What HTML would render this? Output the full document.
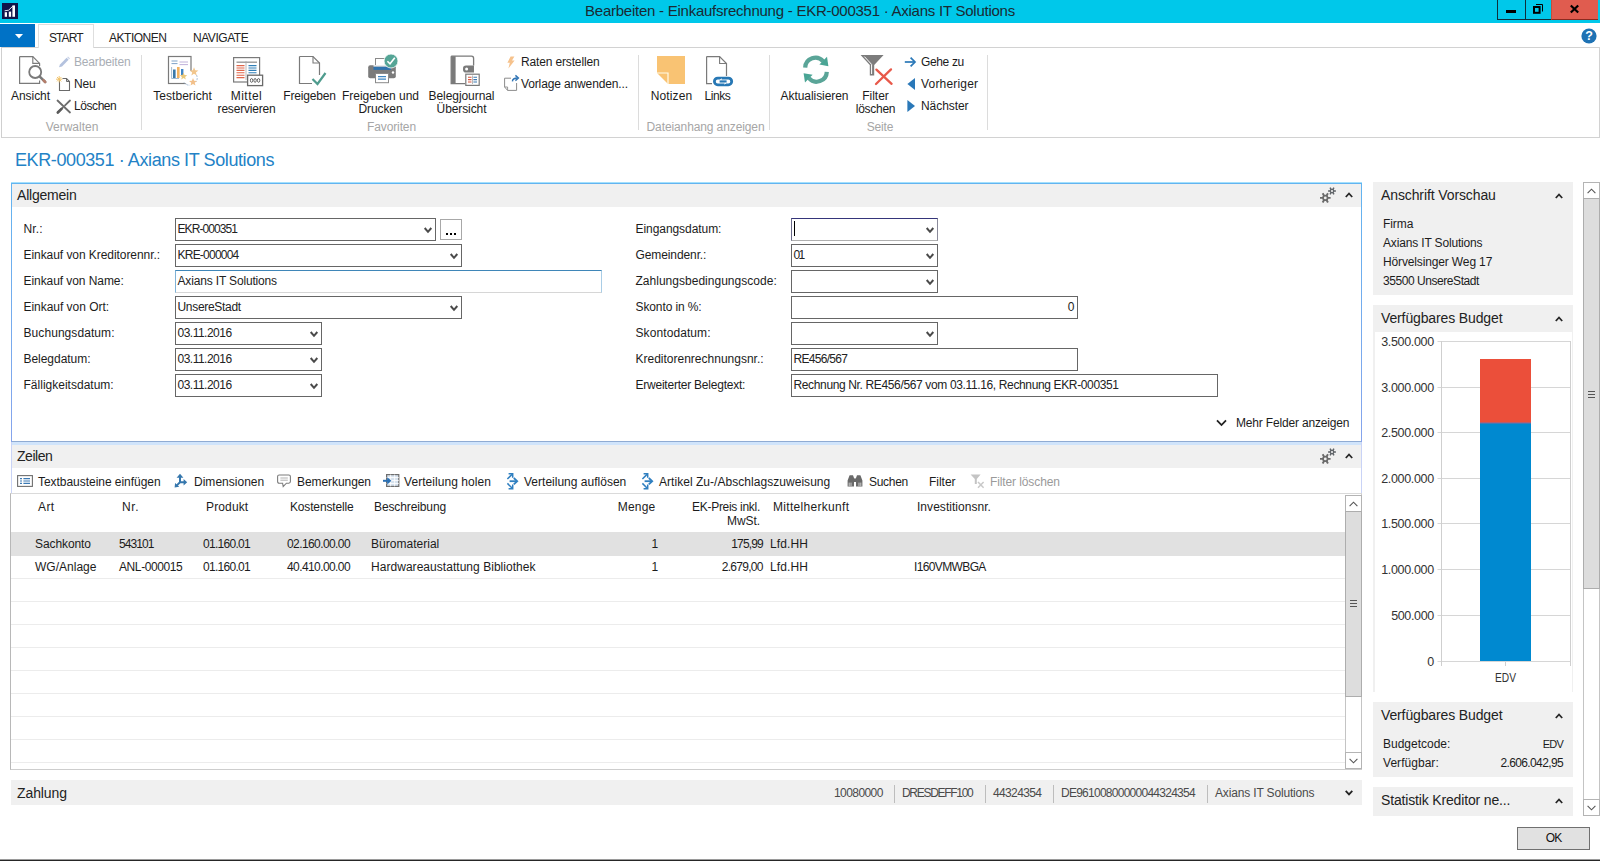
<!DOCTYPE html>
<html lang="de"><head>
<meta charset="utf-8">
<title>Bearbeiten - Einkaufsrechnung - EKR-000351 · Axians IT Solutions</title>
<style>
*{box-sizing:border-box;margin:0;padding:0}
html,body{width:1600px;height:861px;overflow:hidden;background:#fff}
body{position:relative;font-family:"Liberation Sans",sans-serif;font-size:12px;color:#1c1c1c}
.abs{position:absolute}
svg{position:absolute;overflow:visible}
.t{position:absolute;white-space:nowrap;line-height:14px;letter-spacing:-0.25px;color:#1c1c1c}
.c{transform:translateX(-50%);text-align:center}
.r{transform:translateX(-100%);text-align:right}
/* title bar */
#titlebar{position:absolute;left:0;top:0;width:1600px;height:23px;background:#00c8ea}
#title{position:absolute;left:0;width:1600px;top:2px;text-align:center;font-size:15px;line-height:17px;color:#1a2a33;letter-spacing:-0.35px}
.wb{position:absolute;top:0;height:20px;border-left:1px solid #0e2f3b;border-bottom:1px solid #0e2f3b}
/* tabs */
#appbtn{position:absolute;left:0;top:24px;width:35px;height:23px;background:#0072c6}
.tab{position:absolute;top:31px;font-size:12px;line-height:15px;color:#222;white-space:nowrap;letter-spacing:-0.4px}
#starttab{position:absolute;left:38px;top:24px;width:56px;height:24px;border:1px solid #dedede;border-bottom:none;background:#fff;z-index:2}
#ribbon{position:absolute;left:1px;top:47px;width:1599px;height:91px;border:1px solid #d2d2d2;border-left:1px solid #cfcfcf;background:#fff}
.sep{position:absolute;top:55px;width:1px;height:75px;background:#dcdcdc}
.grp{position:absolute;top:120px;color:#a6a6a6;white-space:nowrap;line-height:14px;transform:translateX(-50%);letter-spacing:-0.2px}
.dis{color:#a9aeb5}
/* panels */
.phead{position:absolute;background:#f0f0f0;height:24px}
.ptitle{position:absolute;font-size:14px;line-height:16px;letter-spacing:-0.35px;color:#222;white-space:nowrap}
.inp{position:absolute;height:23px;border:1px solid #666;background:#fff;font-size:12px;line-height:14px;padding:3px 0 0 1.5px;white-space:nowrap;letter-spacing:-0.45px;color:#222;overflow:hidden}
.lbl{position:absolute;white-space:nowrap;line-height:14px;letter-spacing:-0.1px;color:#1c1c1c}
.gl{position:absolute;left:11px;width:1334px;height:1px;background:#ececec}
.fb{position:absolute;left:1373px;width:200px;background:#f0f0f0}
.fbt{position:absolute;left:8px;top:5px;font-size:14px;line-height:16px;letter-spacing:-0.2px;white-space:nowrap;color:#222}
</style>
</head>
<body>
<!-- TITLE BAR -->
<div id="titlebar"></div>
<svg style="left:2px;top:3px" width="16" height="16" viewBox="0 0 16 16"><rect width="16" height="16" fill="#10154a"></rect><rect x="2.700" y="9.200" width="2.300" height="4.600" fill="#fff"></rect><rect x="6.800" y="8.600" width="2.300" height="5.200" fill="#fff"></rect><rect x="10.400" y="2.400" width="2.600" height="11.400" fill="#fff"></rect><path d="M2.600 7.800 L6.600 7.200 L11 3" stroke="#e6e6f2" stroke-width="1" fill="none"></path></svg>
<div id="title" style="letter-spacing: -0.25px;">Bearbeiten - Einkaufsrechnung - EKR-000351 · Axians IT Solutions</div>
<div class="wb" style="left:1497px;width:29px"></div>
<div class="wb" style="left:1525px;width:27px"></div>
<div class="wb" style="left:1551px;width:47px;background:#e05c4f;border-left-color:#c0503f;border-bottom-color:#8a2a20"></div>
<div class="abs" style="left:1506px;top:10px;width:10px;height:3px;background:#000"></div>
<svg style="left:1533px;top:4px" width="11" height="10" viewBox="0 0 11 10"><path d="M3 0.500 H9.500 V7.500" stroke="#000" stroke-width="1" fill="none"></path><rect x="1" y="3" width="5.600" height="5.800" stroke="#000" stroke-width="2" fill="none"></rect></svg>
<svg style="left:1570px;top:5px" width="9" height="8" viewBox="0 0 9 8"><path d="M0.8 0.5 L8.2 7.5 M8.2 0.5 L0.8 7.5" stroke="#000" stroke-width="2.2" fill="none"></path></svg>
<!-- TABS -->
<div id="appbtn"></div>
<svg style="left:15px;top:33.500px" width="8" height="5" viewBox="0 0 8 5"><path d="M0 0 H8 L4 4.6 Z" fill="#fff"></path></svg>
<div id="starttab"></div>
<div class="tab" style="left: 49px; z-index: 3; letter-spacing: -0.93px;">START</div>
<div class="tab" style="left: 109px; letter-spacing: -0.48px;">AKTIONEN</div>
<div class="tab" style="left: 193px; letter-spacing: -0.46px;">NAVIGATE</div>
<svg style="left:1581px;top:28px" width="16" height="16" viewBox="0 0 16 16"><circle cx="8" cy="8" r="7.6" fill="#1e72b4"></circle><text x="8" y="12.4" font-family="Liberation Sans, sans-serif" font-size="12.5" font-weight="bold" fill="#fff" text-anchor="middle">?</text></svg>
<div id="ribbon"></div>
<!-- RIBBON -->
<div class="sep" style="left:141px"></div>
<div class="sep" style="left:638px"></div>
<div class="sep" style="left:769px"></div>
<div class="sep" style="left:987px"></div>
<!-- Ansicht -->
<svg style="left:18px;top:55px" width="30" height="30" viewBox="0 0 30 30"><path d="M1.600 1.600 H14.800 L21.600 8.400 V11 M1.600 1.600 V28.400 H21.600 V25.500" stroke="#7a7a7a" stroke-width="1.200" fill="none"></path><path d="M14.800 1.600 V8.400 H21.600" stroke="#7a7a7a" stroke-width="1.100" fill="none"></path><circle cx="17.200" cy="17" r="6" stroke="#7a7a7a" stroke-width="1.800" fill="#fff"></circle><path d="M21.800 21.600 L27.200 27" stroke="#7a7a7a" stroke-width="2.500" stroke-linecap="round"></path><path d="M25.600 25.400 L27.200 27" stroke="#b57d6a" stroke-width="2.500" stroke-linecap="round"></path></svg>
<div class="t c" style="left: 30.5px; top: 89px; letter-spacing: -0.06px;">Ansicht</div>
<svg style="left:57px;top:56px" width="14" height="13" viewBox="0 0 14 13"><path d="M2 11.3 L3 8.4 L9.6 1.8 L11.6 3.8 L5 10.4 Z" fill="#b4c2de"></path><path d="M10.2 1.2 L11 0.5 L13 2.5 L12.2 3.2 Z" fill="#c6d0e6"></path></svg>
<div class="t dis" style="left: 74px; top: 55px; letter-spacing: -0.16px;">Bearbeiten</div>
<svg style="left:56px;top:76px" width="16" height="16" viewBox="0 0 16 16"><path d="M3.5 4.5 V14.5 H13.5 V5.5 L10.5 2.5 H6.5" stroke="#6a6a6a" stroke-width="1.1" fill="#fff"></path><path d="M10.5 2.5 V5.5 H13.5" stroke="#6a6a6a" stroke-width="1" fill="none"></path><path d="M3.2 0 V6.4 M0 3.2 H6.4 M1 1 L5.4 5.4 M5.4 1 L1 5.4" stroke="#f0c060" stroke-width="0.9"></path></svg>
<div class="t" style="left: 74px; top: 77px; letter-spacing: -0.11px;">Neu</div>
<svg style="left:56px;top:99px" width="16" height="15" viewBox="0 0 16 15"><path d="M1.5 1.5 L14 13.5" stroke="#6c6c6c" stroke-width="1.8" stroke-linecap="round"></path><path d="M14 1.5 L9 6.3 M6.8 8.6 L1.8 13.5" stroke="#6c6c6c" stroke-width="1.8" stroke-linecap="round"></path><path d="M1.8 13.5 L5.5 9.8" stroke="#5a5a5a" stroke-width="2.6" stroke-linecap="round"></path></svg>
<div class="t" style="left: 74px; top: 99px; letter-spacing: -0.43px;">Löschen</div>
<div class="grp" style="left: 72px; letter-spacing: -0.01px;">Verwalten</div>
<!-- Testbericht -->
<svg style="left:167px;top:55px" width="34" height="32" viewBox="0 0 34 32"><rect x="1.5" y="1.5" width="22.5" height="27" stroke="#7a7a7a" stroke-width="1.2" fill="#fff"></rect><path d="M4.5 6 H10.5 M4.5 8.6 H10.5" stroke="#7fa3c8" stroke-width="1"></path><path d="M12.5 7 H21 M12.5 9.6 H21" stroke="#b9a9d6" stroke-width="0.9"></path><rect x="6" y="14.5" width="2.6" height="8.5" fill="#3b78a8"></rect><rect x="10" y="12" width="2.6" height="11" fill="#f3b25f"></rect><rect x="14" y="14" width="2.4" height="6" fill="#3f85c6"></rect><path d="M4.6 12 V23.5 H12" stroke="#8aa9c8" stroke-width="0.8" fill="none"></path><circle cx="23" cy="23" r="7" fill="#fff"></circle><path d="M17 27.5 A7 7 0 0 0 23 30.2 M29.5 20 A7 7 0 0 1 29 27" stroke="#9db7d4" stroke-width="0.9" fill="none" stroke-dasharray="2 1.2"></path><path d="M27 12.2 l1.2 3 3.2 .2 -2.5 2 .9 3.1 -2.8 -1.8 -2.7 1.8 .9 -3.1 -2.5 -2 3.2 -.2z" fill="#f2c68c"></path><path d="M16.5 17.5 l1 2.5 2.7 .2 -2.1 1.7 .7 2.6 -2.3 -1.5 -2.3 1.5 .7 -2.6 -2.1 -1.7 2.7 -.2z" fill="#e9c87a"></path><path d="M26 23 l1.1 2.7 2.9 .2 -2.3 1.8 .8 2.8 -2.5 -1.6 -2.5 1.6 .8 -2.8 -2.3 -1.8 2.9 -.2z" fill="#f2c08a"></path></svg>
<div class="t c" style="left: 182.5px; top: 89px; letter-spacing: 0.06px;">Testbericht</div>
<!-- Mittel reservieren -->
<svg style="left:232px;top:56px" width="32" height="31" viewBox="0 0 32 31"><rect x="1.6" y="1.6" width="26" height="24.4" stroke="#7a7a7a" stroke-width="1.2" fill="#fff"></rect><path d="M4.5 6.2 H25" stroke="#9a9a9a" stroke-width="1.4"></path><path d="M4.5 9.6 H12.5 M4.5 12 H12.5 M4.5 14.4 H12.5 M4.5 16.8 H12.5 M4.5 19.2 H12.5 M4.5 21.6 H12.5" stroke="#e0664a" stroke-width="1.1"></path><path d="M14 5 V24" stroke="#aaa" stroke-width="0.8"></path><path d="M16.5 9.6 H24.5 M16.5 12 H24.5 M16.5 14.4 H24.5 M16.5 16.8 H24.5" stroke="#2f7fb8" stroke-width="1.1"></path><rect x="15.6" y="19.2" width="15" height="10.4" stroke="#6a6a6a" stroke-width="1.3" fill="#fff"></rect><ellipse cx="19.6" cy="24.4" rx="1.2" ry="1.9" stroke="#555" stroke-width="0.9" fill="none"></ellipse><ellipse cx="23.1" cy="24.4" rx="1.2" ry="1.9" stroke="#555" stroke-width="0.9" fill="none"></ellipse><ellipse cx="26.6" cy="24.4" rx="1.2" ry="1.9" stroke="#555" stroke-width="0.9" fill="none"></ellipse></svg>
<div class="t c" style="left: 246.5px; top: 89px; letter-spacing: 0.47px;">Mittel</div>
<div class="t c" style="left: 246.5px; top: 102px; letter-spacing: -0.2px;">reservieren</div>
<!-- Freigeben -->
<svg style="left:298px;top:55px" width="30" height="31" viewBox="0 0 30 31"><path d="M1.5 1.5 H15 L21.5 8 V20 M1.5 1.5 V28.5 H14" stroke="#7a7a7a" stroke-width="1.2" fill="none"></path><path d="M15 1.5 V8 H21.5" stroke="#7a7a7a" stroke-width="1.1" fill="none"></path><path d="M14.5 24 L19.5 29 L27.5 18" stroke="#4f9c8e" stroke-width="2.2" fill="none"></path></svg>
<div class="t c" style="left: 309.5px; top: 89px; letter-spacing: -0.18px;">Freigeben</div>
<!-- Freigeben und Drucken -->
<svg style="left:367px;top:53px" width="34" height="31" viewBox="0 0 34 31"><rect x="8.5" y="5.5" width="14" height="9" stroke="#8a8a8a" stroke-width="1" fill="#fff"></rect><rect x="1.2" y="12.2" width="27.6" height="13" rx="2" fill="#7b7b7b"></rect><rect x="6.5" y="13.5" width="17.5" height="3.4" fill="#2f73ae"></rect><rect x="6.5" y="12.2" width="17.5" height="1.3" fill="#fff"></rect><rect x="8.5" y="20.5" width="13" height="9.2" stroke="#8a8a8a" stroke-width="1" fill="#fff"></rect><path d="M11 23.6 H19 M11 26.2 H19" stroke="#3f86c2" stroke-width="1.2"></path><circle cx="26" cy="19.5" r="1.2" fill="#fff"></circle><circle cx="24" cy="8" r="7" fill="#55a596" stroke="#fff" stroke-width="0.8"></circle><path d="M20.4 8.2 L23 10.8 L27.8 4.8" stroke="#fff" stroke-width="1.6" fill="none"></path></svg>
<div class="t c" style="left: 380.5px; top: 89px; letter-spacing: -0.03px;">Freigeben und</div>
<div class="t c" style="left: 380.5px; top: 102px; letter-spacing: -0.08px;">Drucken</div>
<!-- Belegjournal -->
<svg style="left:450px;top:55px" width="31" height="32" viewBox="0 0 31 32"><path d="M1.2 1.2 H21.5 Q23.6 1.2 23.6 3.4 V10.5 M1.2 1.2 V28.6 H15" stroke="#7a7a7a" stroke-width="1.3" fill="none"></path><rect x="1.2" y="1.2" width="4.4" height="27.4" fill="#7a7a7a"></rect><path d="M13 13.2 Q13 10.4 16 10.4 H24 V17.6 H16 Q13 17.6 13 14.8 Z" fill="#7a7a7a"></path><circle cx="16.6" cy="14" r="1.5" fill="#fff"></circle><rect x="15.8" y="19.2" width="13.4" height="11.2" stroke="#7a7a7a" stroke-width="1.2" fill="#fff"></rect><path d="M18 22.2 H21.5 M18 24.6 H21.5 M18 27 H21.5" stroke="#d8553c" stroke-width="1.1"></path><path d="M23.4 22.2 H27 M23.4 24.6 H27 M23.4 27 H27" stroke="#3a78b0" stroke-width="1.1"></path><path d="M22.5 20.5 V29" stroke="#999" stroke-width="0.7"></path></svg>
<div class="t c" style="left: 461.5px; top: 89px; letter-spacing: -0.07px;">Belegjournal</div>
<div class="t c" style="left: 461.5px; top: 102px; letter-spacing: -0.09px;">Übersicht</div>
<!-- Raten / Vorlage -->
<svg style="left:506px;top:56px" width="10" height="13" viewBox="0 0 10 13"><path d="M4.6 0.5 H8.4 L6 4.6 H8.6 L2.4 12.4 L3.8 6.8 H1.4 Z" fill="#f6c28c"></path></svg>
<div class="t" style="left: 521px; top: 55px; letter-spacing: -0.15px;">Raten erstellen</div>
<svg style="left:503px;top:75px" width="18" height="17" viewBox="0 0 18 17"><path d="M8 3.2 H1.6 V12 L4.6 15.4 H13.6 V8" stroke="#8c8c8c" stroke-width="1" fill="#fff"></path><path d="M1.6 12 H4.6 V15.4" stroke="#8c8c8c" stroke-width="0.9" fill="none"></path><path d="M9.4 6.4 Q9.6 3 14.6 3" stroke="#2f74b5" stroke-width="1.4" fill="none"></path><path d="M12.4 0.4 L15.4 3 L12.4 5.6" stroke="#2f74b5" stroke-width="1.4" fill="none"></path></svg>
<div class="t" style="left: 521px; top: 77px; letter-spacing: -0.13px;">Vorlage anwenden...</div>
<div class="grp" style="left: 391.5px; letter-spacing: -0.13px;">Favoriten</div>
<!-- Notizen / Links -->
<svg style="left:657px;top:56px" width="28" height="28" viewBox="0 0 28 28"><path d="M0 0 H28 V28 H11 L0 17 Z" fill="#f9c373"></path><path d="M0 17 H11 V28" stroke="#fffbe8" stroke-width="1.2" fill="none"></path></svg>
<div class="t c" style="left: 671.5px; top: 89px; letter-spacing: 0.12px;">Notizen</div>
<svg style="left:705px;top:55px" width="30" height="33" viewBox="0 0 30 33"><path d="M1.6 1.6 H14.6 L21.5 8.5 V21 M1.6 1.6 V28.6 H7" stroke="#7a7a7a" stroke-width="1.2" fill="none"></path><path d="M14.6 1.6 V8.5 H21.5" stroke="#7a7a7a" stroke-width="1.1" fill="none"></path><rect x="9.400" y="23.100" width="17.300" height="6.700" rx="3.350" stroke="#2778b5" stroke-width="2.800" fill="#fff"></rect><path d="M14.600 26.450 H21.600" stroke="#2778b5" stroke-width="2.200"></path><path d="M15.200 24.800 L17 23.900 M19.200 29 L21 28.100" stroke="#fff" stroke-width="1"></path></svg>
<div class="t c" style="left: 717.5px; top: 89px; letter-spacing: -0.45px;">Links</div>
<div class="grp" style="left: 705.5px; letter-spacing: -0.11px;">Dateianhang anzeigen</div>
<!-- Aktualisieren -->
<svg style="left:801px;top:55px" width="30" height="30" viewBox="0 0 30 30"><path d="M4.2 12.6 A10.2 10.2 0 0 1 22.2 6.4" stroke="#5aa598" stroke-width="4.2" fill="none"></path><path d="M18.4 9.6 L27.4 11.2 L26 1.8 Z" fill="#4aa595"></path><path d="M25.8 16.8 A10.2 10.2 0 0 1 7.8 23" stroke="#5aa598" stroke-width="4.2" fill="none"></path><path d="M11.6 19.8 L2.6 18.2 L4 27.6 Z" fill="#4aa595"></path></svg>
<div class="t c" style="left: 814.5px; top: 89px; letter-spacing: -0.06px;">Aktualisieren</div>
<!-- Filter loeschen -->
<svg style="left:859px;top:54px" width="36" height="32" viewBox="0 0 36 32"><path d="M1.6 1 H24.6 L15.2 11 V21.6 H10.8 V11 Z" fill="#7c7c7c"></path><path d="M5.4 2.6 L12.6 10.4 V20" stroke="#fff" stroke-width="1" fill="none"></path><path d="M17.4 15.6 L32.6 29.8" stroke="#e8594a" stroke-width="2.3" stroke-linecap="round"></path><path d="M32 15.4 L17 30" stroke="#e8594a" stroke-width="2.3" stroke-linecap="round"></path></svg>
<div class="t c" style="left: 875.5px; top: 89px; letter-spacing: -0.03px;">Filter</div>
<div class="t c" style="left: 875.5px; top: 102px; letter-spacing: -0.26px;">löschen</div>
<svg style="left:904px;top:56px" width="13" height="12" viewBox="0 0 13 12"><path d="M0.8 6 H10.5" stroke="#2a78b8" stroke-width="1.7"></path><path d="M6.6 1.6 L11 6 L6.6 10.4" stroke="#2a78b8" stroke-width="1.7" fill="none"></path></svg>
<div class="t" style="left: 921px; top: 55px; letter-spacing: -0.36px;">Gehe zu</div>
<svg style="left:907px;top:78px" width="9" height="12" viewBox="0 0 9 12"><path d="M8 0 V12 L0.4 6 Z" fill="#2a78b8"></path></svg>
<div class="t" style="left: 921px; top: 77px; letter-spacing: 0.18px;">Vorheriger</div>
<svg style="left:907px;top:100px" width="9" height="12" viewBox="0 0 9 12"><path d="M0.4 0 V12 L8 6 Z" fill="#2a78b8"></path></svg>
<div class="t" style="left: 921px; top: 99px; letter-spacing: -0.06px;">Nächster</div>
<div class="grp" style="left: 880px; letter-spacing: -0.19px;">Seite</div>
<!-- PAGE TITLE -->
<div class="abs" style="left: 15px; top: 150px; font-size: 18px; line-height: 20px; color: rgb(35, 130, 198); white-space: nowrap; letter-spacing: -0.4px;">EKR-000351 · Axians IT Solutions</div>
<!-- ALLGEMEIN -->
<div class="abs" style="left:10.5px;top:182px;width:1351.5px;height:260px;background:linear-gradient(#62b4f0,#86a4ec)"></div>
<div class="abs" style="left:10.5px;top:182px;width:1351.5px;height:1px;background:#a4e0fc"></div>
<div class="abs" style="left:12px;top:184px;width:1349px;height:257px;background:#fff"></div>
<div class="abs" style="left:12px;top:441px;width:1349px;height:1px;background:#8fabd3"></div>
<div class="phead" style="left:12px;top:184px;width:1349px;height:23px"></div>
<div class="ptitle" style="left: 17px; top: 187px; letter-spacing: -0.21px;">Allgemein</div>
<svg style="left:1319px;top:185px" width="18" height="20" viewBox="0 0 18 20"><g stroke="#6a6a6a" stroke-width="1.9" fill="none"><path d="M1 12.900 H11.600 M3.650 8.300 L8.950 17.500 M8.950 8.300 L3.650 17.500"></path></g><circle cx="6.300" cy="12.900" r="3.100" fill="#6a6a6a"></circle><circle cx="6.300" cy="12.900" r="1.400" fill="#f0f0f0"></circle><g stroke="#5f6368" stroke-width="1.500" fill="none"><path d="M9.100 6 H16.900 M11.050 2.600 L14.950 9.400 M14.950 2.600 L11.050 9.400"></path></g><circle cx="13" cy="6" r="2.300" fill="#5f6368"></circle><circle cx="13" cy="6" r="1.100" fill="#f0f0f0"></circle></svg>
<svg style="left:1344.500px;top:191.500px" width="8" height="6" viewBox="0 0 8 6"><path d="M0.800 5 L4 1.500 L7.200 5" stroke="#262626" stroke-width="1.800" fill="none"></path></svg>
<div class="lbl" style="left: 23.5px; top: 222px; letter-spacing: 0.11px;">Nr.:</div>
<div class="lbl" style="left: 23.5px; top: 248px; letter-spacing: -0.06px;">Einkauf von Kreditorennr.:</div>
<div class="lbl" style="left: 23.5px; top: 274px; letter-spacing: -0.07px;">Einkauf von Name:</div>
<div class="lbl" style="left: 23.5px; top: 300px; letter-spacing: -0.03px;">Einkauf von Ort:</div>
<div class="lbl" style="left: 23.5px; top: 326px; letter-spacing: 0.07px;">Buchungsdatum:</div>
<div class="lbl" style="left: 23.5px; top: 352px; letter-spacing: -0.04px;">Belegdatum:</div>
<div class="lbl" style="left: 23.5px; top: 378px; letter-spacing: 0.01px;">Fälligkeitsdatum:</div>
<div class="lbl" style="left: 635.5px; top: 222px; letter-spacing: -0.06px;">Eingangsdatum:</div>
<div class="lbl" style="left: 635.5px; top: 248px; letter-spacing: -0.1px;">Gemeindenr.:</div>
<div class="lbl" style="left: 635.5px; top: 274px; letter-spacing: 0.02px;">Zahlungsbedingungscode:</div>
<div class="lbl" style="left: 635.5px; top: 300px; letter-spacing: -0.11px;">Skonto in %:</div>
<div class="lbl" style="left: 635.5px; top: 326px; letter-spacing: 0.09px;">Skontodatum:</div>
<div class="lbl" style="left: 635.5px; top: 352px; letter-spacing: 0px;">Kreditorenrechnungsnr.:</div>
<div class="lbl" style="left: 635.5px; top: 378px; letter-spacing: -0.23px;">Erweiterter Belegtext:</div>
<div class="inp" style="left: 175px; top: 218px; width: 261px; letter-spacing: -0.91px;">EKR-000351</div>
<svg style="left:423.6px;top:227px" width="8" height="7" viewBox="0 0 8 7"><path d="M0.7 1 L4 4.8 L7.3 1" stroke="#4a4a4a" stroke-width="2" fill="none"></path></svg>
<div class="inp" style="left: 175px; top: 244px; width: 287px; letter-spacing: -0.77px;">KRE-000004</div>
<svg style="left:449.6px;top:253px" width="8" height="7" viewBox="0 0 8 7"><path d="M0.7 1 L4 4.8 L7.3 1" stroke="#4a4a4a" stroke-width="2" fill="none"></path></svg>
<div class="inp" style="left: 175px; top: 270px; width: 427px; border-color: rgb(63, 134, 184) rgb(169, 205, 230) rgb(214, 214, 214) rgb(127, 178, 214); letter-spacing: -0.16px;">Axians IT Solutions</div>
<div class="inp" style="left: 175px; top: 296px; width: 287px; letter-spacing: -0.31px;">UnsereStadt</div>
<svg style="left:449.6px;top:305px" width="8" height="7" viewBox="0 0 8 7"><path d="M0.7 1 L4 4.8 L7.3 1" stroke="#4a4a4a" stroke-width="2" fill="none"></path></svg>
<div class="inp" style="left: 175px; top: 322px; width: 147px; letter-spacing: -0.51px;">03.11.2016</div>
<svg style="left:309.6px;top:331px" width="8" height="7" viewBox="0 0 8 7"><path d="M0.7 1 L4 4.8 L7.3 1" stroke="#4a4a4a" stroke-width="2" fill="none"></path></svg>
<div class="inp" style="left: 175px; top: 348px; width: 147px; letter-spacing: -0.51px;">03.11.2016</div>
<svg style="left:309.6px;top:357px" width="8" height="7" viewBox="0 0 8 7"><path d="M0.7 1 L4 4.8 L7.3 1" stroke="#4a4a4a" stroke-width="2" fill="none"></path></svg>
<div class="inp" style="left: 175px; top: 374px; width: 147px; letter-spacing: -0.51px;">03.11.2016</div>
<svg style="left:309.6px;top:383px" width="8" height="7" viewBox="0 0 8 7"><path d="M0.7 1 L4 4.8 L7.3 1" stroke="#4a4a4a" stroke-width="2" fill="none"></path></svg>
<div class="inp" style="left:791px;top:218px;width:147px;border-color:#35357a #8a8a9a #b0b0b0 #6a6a8a"></div>
<svg style="left:925.6px;top:227px" width="8" height="7" viewBox="0 0 8 7"><path d="M0.7 1 L4 4.8 L7.3 1" stroke="#4a4a4a" stroke-width="2" fill="none"></path></svg>
<div class="inp" style="left: 791px; top: 244px; width: 147px; letter-spacing: -1.76px;">01</div>
<svg style="left:925.6px;top:253px" width="8" height="7" viewBox="0 0 8 7"><path d="M0.7 1 L4 4.8 L7.3 1" stroke="#4a4a4a" stroke-width="2" fill="none"></path></svg>
<div class="inp" style="left:791px;top:270px;width:147px;"></div>
<svg style="left:925.6px;top:279px" width="8" height="7" viewBox="0 0 8 7"><path d="M0.7 1 L4 4.8 L7.3 1" stroke="#4a4a4a" stroke-width="2" fill="none"></path></svg>
<div class="inp" style="left:791px;top:296px;width:287px;text-align:right;padding-right:3px">0</div>
<div class="inp" style="left:791px;top:322px;width:147px;"></div>
<svg style="left:925.6px;top:331px" width="8" height="7" viewBox="0 0 8 7"><path d="M0.7 1 L4 4.8 L7.3 1" stroke="#4a4a4a" stroke-width="2" fill="none"></path></svg>
<div class="inp" style="left: 791px; top: 348px; width: 287px; letter-spacing: -0.71px;">RE456/567</div>
<div class="inp" style="left: 791px; top: 374px; width: 427px; letter-spacing: -0.36px;">Rechnung Nr. RE456/567 vom 03.11.16, Rechnung EKR-000351</div>
<div class="abs" style="left:440px;top:219px;width:22px;height:21px;border:1px solid #a8a8a8;background:#fff"></div>
<div class="abs" style="left:446px;top:233px;width:2px;height:2px;background:#000;box-shadow:4px 0 0 #000,8px 0 0 #000"></div>
<div class="abs" style="left:794px;top:221px;width:1px;height:15px;background:#000"></div>
<svg style="left:1216px;top:419px" width="11" height="8" viewBox="0 0 11 8"><path d="M1 1.3 L5.500 6 L10 1.3" stroke="#222" stroke-width="1.8" fill="none"></path></svg>
<div class="lbl" style="left: 1236px; top: 416px; letter-spacing: -0.17px;">Mehr Felder anzeigen</div>
<!-- ZEILEN -->
<div class="abs" style="left:10.5px;top:442px;width:1351.5px;height:52px;background:#c9d3f6"></div>
<div class="abs" style="left:12px;top:442px;width:1349px;height:3px;background:#d0e4fb"></div>
<div class="abs" style="left:12px;top:445px;width:1349px;height:49px;background:#fff"></div>
<div class="phead" style="left:12px;top:445px;width:1349px;height:23px"></div>
<div class="ptitle" style="left: 17px; top: 448px; letter-spacing: -0.47px;">Zeilen</div>
<svg style="left:1319px;top:446px" width="18" height="20" viewBox="0 0 18 20"><g stroke="#6a6a6a" stroke-width="1.9" fill="none"><path d="M1 12.900 H11.600 M3.650 8.300 L8.950 17.500 M8.950 8.300 L3.650 17.500"></path></g><circle cx="6.300" cy="12.900" r="3.100" fill="#6a6a6a"></circle><circle cx="6.300" cy="12.900" r="1.400" fill="#f0f0f0"></circle><g stroke="#5f6368" stroke-width="1.500" fill="none"><path d="M9.100 6 H16.900 M11.050 2.600 L14.950 9.400 M14.950 2.600 L11.050 9.400"></path></g><circle cx="13" cy="6" r="2.300" fill="#5f6368"></circle><circle cx="13" cy="6" r="1.100" fill="#f0f0f0"></circle></svg>
<svg style="left:1344.500px;top:452.500px" width="8" height="6" viewBox="0 0 8 6"><path d="M0.800 5 L4 1.500 L7.200 5" stroke="#262626" stroke-width="1.800" fill="none"></path></svg>
<!-- toolbar -->
<svg style="left:17px;top:475px" width="16" height="12" viewBox="0 0 16 12"><rect x="0.6" y="0.6" width="14.8" height="10.8" stroke="#6f6f6f" stroke-width="1.1" fill="#fff"></rect><path d="M3 3.6 H5 M6.4 3.6 H13 M3 6 H5 M6.4 6 H13 M3 8.4 H5 M6.4 8.4 H13" stroke="#3b79b3" stroke-width="1.1"></path></svg>
<div class="t tb" style="left: 38px; top: 474.5px; letter-spacing: -0.04px;">Textbausteine einfügen</div>
<svg style="left:174px;top:473px" width="14" height="15" viewBox="0 0 14 15"><path d="M6 9.200 V3.500 M6 9.200 H10.500 M6 9.200 L2.800 12.400" stroke="#3677ad" stroke-width="2" fill="none"></path><path d="M6 0.800 L9.400 4.800 H2.600 Z M13.200 9.200 L9.600 5.900 V12.500 Z M0.600 14.400 L1.100 9.900 L5.300 13.800 Z" fill="#3677ad"></path></svg>
<div class="t tb" style="left: 194px; top: 474.5px; letter-spacing: 0.02px;">Dimensionen</div>
<svg style="left:277px;top:474px" width="15" height="14" viewBox="0 0 15 14"><path d="M2.200 1 H11.800 Q13.400 1 13.400 2.600 V7.600 Q13.400 9.200 11.800 9.200 H9.400 L6.200 12.600 L5.600 9.200 H2.200 Q0.600 9.200 0.600 7.600 V2.600 Q0.600 1 2.200 1 Z" stroke="#7d7d7d" stroke-width="1.100" fill="#fff"></path><path d="M3.400 4 H10.800 M3.400 6.200 H10.800" stroke="#a8a8a8" stroke-width="0.900"></path></svg>
<div class="t tb" style="left: 297px; top: 474.5px; letter-spacing: -0.07px;">Bemerkungen</div>
<svg style="left:383px;top:474px" width="17" height="13" viewBox="0 0 17 13"><rect x="3.600" y="0.600" width="12.200" height="11.800" stroke="#6e6e6e" stroke-width="1.200" fill="#d6e2ee"></rect><path d="M3.600 3.500 H15.800 M3.600 6.500 H15.800 M3.600 9.500 H15.800 M7.600 0.600 V12.400 M11.600 0.600 V12.400" stroke="#fff" stroke-width="0.800"></path><path d="M0 6.800 H6.400" stroke="#2a70b4" stroke-width="2"></path><path d="M4.200 3.200 L8.400 6.800 L4.200 10.400 Z" fill="#2a70b4"></path></svg>
<div class="t tb" style="left: 404px; top: 474.5px; letter-spacing: 0.06px;">Verteilung holen</div>
<svg style="left:505px;top:472px" width="14" height="18" viewBox="0 0 14 18"><g stroke="#2f7fc0" fill="none"><path d="M2.400 7 L7 2.400" stroke-width="1.500"></path><path d="M3.600 1.700 H7.700 V5.800" stroke-width="1.500"></path><path d="M4.600 9.200 H11.800" stroke-width="1.800"></path><path d="M8.800 6 L12.200 9.200 L8.800 12.400" stroke-width="1.800"></path><path d="M2.400 11.400 L7 16" stroke-width="1.500"></path><path d="M3.600 16.700 H7.700 V12.600" stroke-width="1.500"></path></g></svg>
<div class="t tb" style="left: 524px; top: 474.5px; letter-spacing: 0.01px;">Verteilung auflösen</div>
<svg style="left:640px;top:472px" width="14" height="18" viewBox="0 0 14 18"><g stroke="#2f7fc0" fill="none"><path d="M2.400 7 L7 2.400" stroke-width="1.500"></path><path d="M3.600 1.700 H7.700 V5.800" stroke-width="1.500"></path><path d="M4.600 9.200 H11.800" stroke-width="1.800"></path><path d="M8.800 6 L12.200 9.200 L8.800 12.400" stroke-width="1.800"></path><path d="M2.400 11.400 L7 16" stroke-width="1.500"></path><path d="M3.600 16.700 H7.700 V12.600" stroke-width="1.500"></path></g></svg>
<div class="t tb" style="left: 659px; top: 474.5px; letter-spacing: 0.04px;">Artikel Zu-/Abschlagszuweisung</div>
<svg style="left:847px;top:474px" width="16" height="14" viewBox="0 0 16 14"><path d="M2.6 1.2 H6 L7 4 V12.6 H0.6 V6.4 Z M13.4 1.2 H10 L9 4 V12.6 H15.4 V6.4 Z" fill="#6a6a6a"></path><rect x="6.6" y="4.4" width="2.8" height="3.6" fill="#6a6a6a"></rect><path d="M2.2 8.6 V12 M4 8.6 V12 M12 8.6 V12 M13.8 8.6 V12" stroke="#e6e6e6" stroke-width="0.8"></path></svg>
<div class="t tb" style="left: 869px; top: 474.5px; letter-spacing: -0.3px;">Suchen</div>
<div class="t tb" style="left: 929px; top: 474.5px; letter-spacing: -0.03px;">Filter</div>
<svg style="left:970px;top:474px" width="15" height="15" viewBox="0 0 15 15"><path d="M0.6 0.6 H10.6 L6.8 5 V10 H4.8 V5 Z" fill="#c4c4c4"></path><path d="M8 8 L13.6 13.8 M13.6 8 L8 13.8" stroke="#c9c9c9" stroke-width="1.5"></path></svg>
<div class="t tb" style="left: 990px; top: 474.5px; color: rgb(154, 154, 154); letter-spacing: -0.11px;">Filter löschen</div>
<!-- grid -->
<div class="abs" style="left:10px;top:493px;width:1352px;height:277px;border:1px solid #cdcdcd;border-left-color:#b8b8b8;border-top-color:#dadada;background:#fff"></div>
<div class="abs" style="left:11px;top:532px;width:1334px;height:24px;background:#e1e1e1"></div>
<div class="gl" style="top:578px"></div>
<div class="gl" style="top:601px"></div>
<div class="gl" style="top:624px"></div>
<div class="gl" style="top:647px"></div>
<div class="gl" style="top:670px"></div>
<div class="gl" style="top:693px"></div>
<div class="gl" style="top:716px"></div>
<div class="gl" style="top:739px"></div>
<div class="gl" style="top:762px"></div>
<div class="t gh" style="left: 38px; top: 500px; letter-spacing: 0.43px;">Art</div>
<div class="t gh" style="left: 122px; top: 500px; letter-spacing: 0.63px;">Nr.</div>
<div class="t gh" style="left: 206px; top: 500px; letter-spacing: 0.14px;">Produkt</div>
<div class="t gh" style="left: 290px; top: 500px; letter-spacing: -0.16px;">Kostenstelle</div>
<div class="t gh" style="left: 374px; top: 500px; letter-spacing: -0.11px;">Beschreibung</div>
<div class="t gh" style="left: 773px; top: 500px; letter-spacing: 0.31px;">Mittelherkunft</div>
<div class="t gh" style="left: 917px; top: 500px; letter-spacing: 0.04px;">Investitionsnr.</div>
<div class="t gh r" style="left: 655.5px; top: 500px; letter-spacing: 0.22px;">Menge</div>
<div class="t gh r" style="left: 760px; top: 500px; letter-spacing: -0.29px;">EK-Preis inkl.</div>
<div class="t gh r" style="left: 760px; top: 514px; letter-spacing: -0.09px;">MwSt.</div>
<div class="t gc" style="left: 35px; top: 537px; letter-spacing: -0.09px;">Sachkonto</div>
<div class="t gc" style="left: 119px; top: 537px; letter-spacing: -0.93px;">543101</div>
<div class="t gc" style="left: 203px; top: 537px; letter-spacing: -0.72px;">01.160.01</div>
<div class="t gc" style="left: 287px; top: 537px; letter-spacing: -0.59px;">02.160.00.00</div>
<div class="t gc" style="left: 371px; top: 537px; letter-spacing: 0.02px;">Büromaterial</div>
<div class="t gc" style="left: 770px; top: 537px; letter-spacing: 0.13px;">Lfd.HH</div>
<div class="t gc r" style="left:658px;top:537px">1</div>
<div class="t gc r" style="left: 762.8px; top: 537px; letter-spacing: -0.86px;">175,99</div>
<div class="t gc" style="left: 35px; top: 560px; letter-spacing: 0.01px;">WG/Anlage</div>
<div class="t gc" style="left: 119px; top: 560px; letter-spacing: -0.4px;">ANL-000015</div>
<div class="t gc" style="left: 203px; top: 560px; letter-spacing: -0.72px;">01.160.01</div>
<div class="t gc" style="left: 287px; top: 560px; letter-spacing: -0.59px;">40.410.00.00</div>
<div class="t gc" style="left: 371px; top: 560px; letter-spacing: 0.04px;">Hardwareaustattung Bibliothek</div>
<div class="t gc" style="left: 770px; top: 560px; letter-spacing: 0.13px;">Lfd.HH</div>
<div class="t gc" style="left: 914px; top: 560px; letter-spacing: -0.63px;">I160VMWBGA</div>
<div class="t gc r" style="left:658px;top:560px">1</div>
<div class="t gc r" style="left: 762.8px; top: 560px; letter-spacing: -0.7px;">2.679,00</div>
<!-- grid scrollbar -->
<div class="abs" style="left:1345px;top:495px;width:17px;height:274px;background:#fff;border-left:1px solid #c4c4c4;border-right:1px solid #c4c4c4"></div>
<div class="abs" style="left:1345px;top:495px;width:17px;height:17px;border:1px solid #b4b4b4;background:#fff"></div>
<svg style="left:1349px;top:501px" width="9" height="6" viewBox="0 0 9 6"><path d="M0.6 5.2 L4.5 1.2 L8.4 5.2" stroke="#555" stroke-width="1.1" fill="none"></path></svg>
<div class="abs" style="left:1345px;top:511px;width:17px;height:186px;border:1px solid #adadad;background:#dddddd"></div>
<div class="abs" style="left:1350px;top:600px;width:7px;height:1px;background:#555;box-shadow:0 3px 0 #555,0 6px 0 #555"></div>
<div class="abs" style="left:1345px;top:752px;width:17px;height:17px;border:1px solid #b4b4b4;background:#fff"></div>
<svg style="left:1349px;top:758px" width="9" height="6" viewBox="0 0 9 6"><path d="M0.6 0.8 L4.5 4.8 L8.4 0.8" stroke="#555" stroke-width="1.1" fill="none"></path></svg>
<!-- ZAHLUNG -->
<div class="phead" style="left:10.5px;top:780px;width:1351.5px;height:24.500px"></div>
<div class="ptitle" style="left: 17px; top: 785px; letter-spacing: -0.1px;">Zahlung</div>
<div class="t zs" style="color: rgb(74, 74, 74); left: 834px; top: 786px; letter-spacing: -0.58px;">10080000</div>
<div class="t zs" style="color: rgb(74, 74, 74); left: 902px; top: 786px; letter-spacing: -1.3px;">DRESDEFF100</div>
<div class="t zs" style="color: rgb(74, 74, 74); left: 993px; top: 786px; letter-spacing: -0.64px;">44324354</div>
<div class="t zs" style="color: rgb(74, 74, 74); left: 1061px; top: 786px; letter-spacing: -0.74px;">DE96100800000044324354</div>
<div class="t zs" style="color: rgb(74, 74, 74); left: 1215px; top: 786px; letter-spacing: -0.16px;">Axians IT Solutions</div>
<div class="abs" style="left:894px;top:785px;width:1px;height:18px;background:#bdbdbd"></div>
<div class="abs" style="left:985px;top:785px;width:1px;height:18px;background:#bdbdbd"></div>
<div class="abs" style="left:1053px;top:785px;width:1px;height:18px;background:#bdbdbd"></div>
<div class="abs" style="left:1207px;top:785px;width:1px;height:18px;background:#bdbdbd"></div>
<svg style="left:1344.5px;top:790px" width="8" height="6" viewBox="0 0 8 6"><path d="M0.700 0.900 L4 4.400 L7.300 0.900" stroke="#222" stroke-width="1.800" fill="none"></path></svg>
<!-- FACTBOXES -->
<div class="fb" style="top:182px;height:113px"><div class="fbt" style="top: 5px; letter-spacing: -0.11px;">Anschrift Vorschau</div></div>
<svg style="left:1554.5px;top:192.5px" width="8" height="6" viewBox="0 0 8 6"><path d="M0.800 5 L4 1.500 L7.200 5" stroke="#262626" stroke-width="1.800" fill="none"></path></svg>
<div class="t fl" style="left: 1383px; top: 217px; letter-spacing: -0.09px;">Firma</div>
<div class="t fl" style="left: 1383px; top: 236px; letter-spacing: -0.16px;">Axians IT Solutions</div>
<div class="t fl" style="left: 1383px; top: 255px; letter-spacing: -0.14px;">Hörvelsinger Weg 17</div>
<div class="t fl" style="left: 1383px; top: 274px; letter-spacing: -0.44px;">35500 UnsereStadt</div>
<div class="fb" style="top:305px;height:387px"><div class="fbt" style="letter-spacing: -0.13px;">Verfügbares Budget</div></div>
<svg style="left:1554.5px;top:315.5px" width="8" height="6" viewBox="0 0 8 6"><path d="M0.800 5 L4 1.500 L7.200 5" stroke="#262626" stroke-width="1.800" fill="none"></path></svg>
<div class="abs" style="left:1375px;top:332px;width:197px;height:360px;background:#fff"></div>
<svg style="left:1375px;top:332px" width="197" height="359" viewBox="0 0 197 359" font-family="Liberation Sans, sans-serif" font-size="12.5" fill="#333">
<path d="M62.5 9.5 H196" stroke="#d6d6d6" stroke-width="1"></path>
<path d="M62.5 55.5 H196" stroke="#d6d6d6" stroke-width="1"></path>
<path d="M62.5 100.5 H196" stroke="#d6d6d6" stroke-width="1"></path>
<path d="M62.5 146.5 H196" stroke="#d6d6d6" stroke-width="1"></path>
<path d="M62.5 191.5 H196" stroke="#d6d6d6" stroke-width="1"></path>
<path d="M62.5 237.5 H196" stroke="#d6d6d6" stroke-width="1"></path>
<path d="M62.5 283.5 H196" stroke="#d6d6d6" stroke-width="1"></path>
<path d="M62.5 329.5 H196" stroke="#d6d6d6" stroke-width="1"></path>
<path d="M66.5 9 V334 M130.5 330 V334 M195.5 9 V334" stroke="#cfcfcf" stroke-width="1" fill="none"></path>
<rect x="105" y="27" width="51" height="64" fill="#eb4f3a"></rect>
<rect x="105" y="91" width="51" height="238" fill="#0089d0"></rect>
<rect x="105" y="90.400" width="51" height="1.100" fill="#8a6a9a"></rect>
<text x="59.200" y="14.1" text-anchor="end" textLength="53" lengthAdjust="spacing">3.500.000</text>
<text x="59.200" y="60.1" text-anchor="end" textLength="53" lengthAdjust="spacing">3.000.000</text>
<text x="59.200" y="105.1" text-anchor="end" textLength="53" lengthAdjust="spacing">2.500.000</text>
<text x="59.200" y="151.1" text-anchor="end" textLength="53" lengthAdjust="spacing">2.000.000</text>
<text x="59.200" y="196.1" text-anchor="end" textLength="53" lengthAdjust="spacing">1.500.000</text>
<text x="59.200" y="242.1" text-anchor="end" textLength="53" lengthAdjust="spacing">1.000.000</text>
<text x="59.200" y="288.1" text-anchor="end" textLength="43" lengthAdjust="spacing">500.000</text>
<text x="59.200" y="334.1" text-anchor="end" textLength="6" lengthAdjust="spacing">0</text>
<text x="130.500" y="350.300" text-anchor="middle" font-size="12" textLength="21" lengthAdjust="spacingAndGlyphs">EDV</text>
</svg>
<div class="fb" style="top:702px;height:75px"><div class="fbt" style="letter-spacing: -0.13px;">Verfügbares Budget</div></div>
<svg style="left:1554.5px;top:712.5px" width="8" height="6" viewBox="0 0 8 6"><path d="M0.800 5 L4 1.500 L7.200 5" stroke="#262626" stroke-width="1.800" fill="none"></path></svg>
<div class="t fl" style="left: 1383px; top: 737px; letter-spacing: -0.01px;">Budgetcode:</div>
<div class="t fl r" style="left: 1563px; top: 737px; font-size: 11px; letter-spacing: -0.81px;">EDV</div>
<div class="t fl" style="left: 1383px; top: 756px; letter-spacing: 0.04px;">Verfügbar:</div>
<div class="t fl r" style="left: 1563px; top: 756px; letter-spacing: -0.63px;">2.606.042,95</div>
<div class="fb" style="top:787px;height:29px"><div class="fbt" style="letter-spacing: -0.16px;">Statistik Kreditor ne...</div></div>
<svg style="left:1554.5px;top:797.5px" width="8" height="6" viewBox="0 0 8 6"><path d="M0.800 5 L4 1.500 L7.200 5" stroke="#262626" stroke-width="1.800" fill="none"></path></svg>
<!-- main scrollbar -->
<div class="abs" style="left:1583px;top:182px;width:17px;height:634px;background:#fff;border:1px solid #c4c4c4"></div>
<div class="abs" style="left:1583px;top:182px;width:17px;height:17px;border:1px solid #b4b4b4;background:#fff"></div>
<svg style="left:1587px;top:188px" width="9" height="6" viewBox="0 0 9 6"><path d="M0.6 5.2 L4.5 1.2 L8.4 5.2" stroke="#555" stroke-width="1.1" fill="none"></path></svg>
<div class="abs" style="left:1583px;top:198px;width:17px;height:391px;border:1px solid #adadad;background:#dddddd"></div>
<div class="abs" style="left:1588px;top:391px;width:7px;height:1px;background:#555;box-shadow:0 3px 0 #555,0 6px 0 #555"></div>
<div class="abs" style="left:1583px;top:799px;width:17px;height:17px;border:1px solid #b4b4b4;background:#fff"></div>
<svg style="left:1587px;top:805px" width="9" height="6" viewBox="0 0 9 6"><path d="M0.6 0.8 L4.5 4.8 L8.4 0.8" stroke="#555" stroke-width="1.1" fill="none"></path></svg>
<!-- OK -->
<div class="abs" style="left: 1517px; top: 827px; width: 73px; height: 23px; border: 1px solid rgb(112, 112, 112); background: rgb(225, 225, 225); text-align: center; font-size: 12px; line-height: 21px; color: rgb(17, 17, 17); letter-spacing: -0.94px;">OK</div>
<div class="abs" style="left:0;top:859px;width:1600px;height:1px;background:#9a9a9a"></div>
<div class="abs" style="left:0;top:860px;width:1600px;height:1px;background:#262626"></div>


</body></html>
